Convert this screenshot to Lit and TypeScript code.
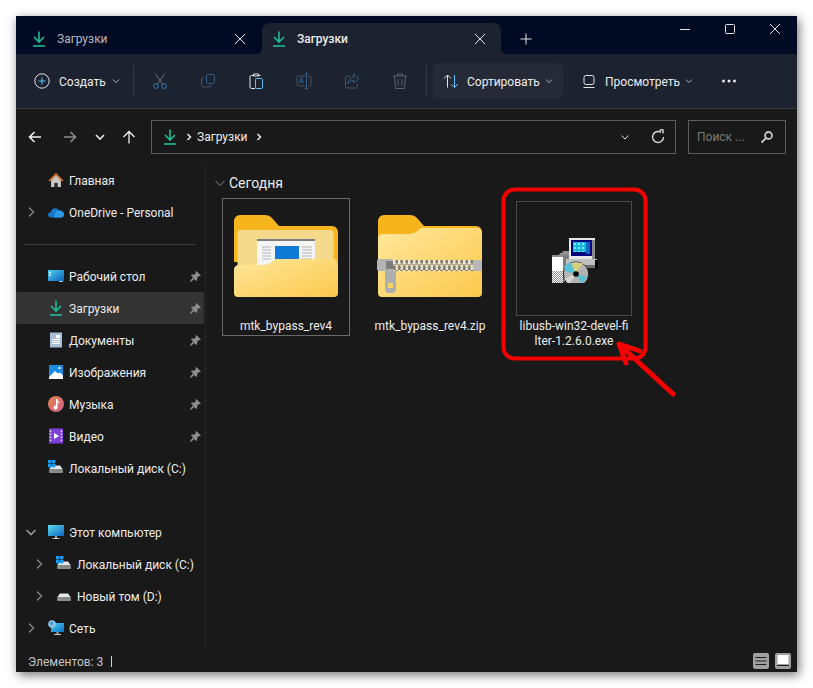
import { LitElement, html, svg, css } from 'lit';
import { customElement } from 'lit/decorators.js';

const dl = html`<svg class="ic" viewBox="0 0 16 16" fill="none" stroke="#1fbb94" stroke-width="1.6"><path d="M8 0.500V10.500M3 6l5 5 5-5"/><path d="M2 15h12"/></svg>`;
const chevDown = html`<svg class="chev" viewBox="0 0 10 10" fill="none" stroke="#b0b4ba" stroke-width="1"><path d="M2 3.500l3 3 3-3"/></svg>`;
const x = html`<svg class="ic" viewBox="0 0 16 16" fill="none" stroke="#e6e6e6" stroke-width="1"><path d="M3 3l10 10M13 3L3 13"/></svg>`;
const pin = html`<svg class="pin" viewBox="0 0 12 12" fill="#8c8c8c"><path d="M7 0l5 5-1.300.8-1-.3-2 2 .3 2.300-1.200 1.200-2.300-2.300L1 12l-1-1 3.300-3.800L1 4.900l1.200-1.200 2.300.3 2-2-.3-1z"/></svg>`;
const arrowRight = html`<svg class="side-chev" viewBox="0 0 16 16" fill="none" stroke="#7c7c7c" stroke-width="1.600"><path d="M6 3.500l4.500 4.500L6 12.500"/></svg>`;
const arrowDown = html`<svg class="side-chev" viewBox="0 0 16 16" fill="none" stroke="#9a9a9a" stroke-width="1.600"><path d="M3.500 6L8 10.500 12.500 6"/></svg>`;

const winLogo = svg`<rect x="0" y="0" width="3.400" height="3.400" fill="#1a9bf0"/><rect x="4" y="0" width="3.400" height="3.400" fill="#1a9bf0"/><rect x="0" y="4" width="3.400" height="3.400" fill="#1a9bf0"/><rect x="4" y="4" width="3.400" height="3.400" fill="#1a9bf0"/>`;
const drive = svg`<path d="M1 9.500L4 5.500H12L15 9.500z" fill="#e8e8e8"/><rect x="1" y="9.500" width="14" height="3.500" rx="1" fill="#8a8a8a"/><rect x="3" y="10.800" width="1.500" height="1" fill="#5fd070"/>`;

const homeIcon = html`<svg class="ic" viewBox="0 0 16 16"><path d="M3 8v7h3.500v-4h3v4H13V8L8 3z" fill="#c8c4c0"/><path d="M0.500 8.500L8 1l7.500 7.500-1 1L8 3 1.500 9.500z" fill="#ec7a24"/></svg>`;
const cloudIcon = html`<svg class="ic" viewBox="0 0 16 16"><path d="M3.500 13.500C1.500 13.500 0 12.300 0 10.800 0 9.300 1.200 8.300 2.700 8.200 3.200 5.800 5 4.300 7.200 4.300c1.700 0 3 .8 3.800 2.200 2.800-.3 5 1.500 5 4 0 1.700-1.300 3-3 3z" fill="#1577d0"/><path d="M7 8.500c1-1.500 3-2.300 4.500-2 2.700 0 4.500 1.700 4.500 4 0 1.700-1.300 3-3 3H6z" fill="#2b9be8"/></svg>`;
const desktopIcon = html`<svg class="ic" viewBox="0 0 16 16"><defs><linearGradient id="dg" x1="0" y1="0" x2="1" y2="1"><stop offset="0" stop-color="#4fd0f4"/><stop offset="1" stop-color="#0c62b8"/></linearGradient></defs><rect x="0" y="2" width="16" height="11" fill="url(#dg)"/><rect x="1" y="4" width="2" height="1.400" fill="#e8f8ff"/><rect x="1" y="6.500" width="2" height="1.400" fill="#e8f8ff"/><rect x="11" y="13" width="4" height="1" fill="#9cc8ea"/></svg>`;
const docIcon = html`<svg class="ic" viewBox="0 0 16 16"><rect x="2" y="0.500" width="12" height="15" fill="#a8bfd6"/><rect x="8" y="3" width="4" height="3" fill="#fff"/><path d="M4 7.500h8M4 9.500h8M4 11.500h8" stroke="#fff" stroke-width="1"/></svg>`;
const imgIcon = html`<svg class="ic" viewBox="0 0 16 16"><rect x="1" y="1" width="14" height="14" fill="#1a8be0"/><path d="M1 13l6-6 3 2.500 2-1 3 3V15H1z" fill="#fff"/><rect x="10.500" y="3" width="2" height="2" fill="#fff"/></svg>`;
const musicIcon = html`<svg class="ic" viewBox="0 0 16 16"><defs><linearGradient id="mg" x1="0" y1="0" x2="1" y2="1"><stop offset="0" stop-color="#e8824a"/><stop offset="1" stop-color="#cc5f86"/></linearGradient></defs><circle cx="8" cy="8" r="8" fill="url(#mg)"/><path d="M8 3h1.500v1.500L11.500 6v1L9.500 6v5.500a2 2 0 1 1-1.500-1.900z" fill="#fff"/></svg>`;
const videoIcon = html`<svg class="ic" viewBox="0 0 16 16"><rect x="1" y="0.500" width="14" height="15" fill="#7d3fd6"/><path d="M6 5l5 3-5 3z" fill="#fff"/><path d="M2.500 2.500v11M13.500 2.500v11" stroke="#e6d8ff" stroke-width="1.500" stroke-dasharray="1.500 1.500"/></svg>`;
const diskC = html`<svg class="ic" viewBox="0 0 16 16">${drive}${winLogo}</svg>`;
const diskD = html`<svg class="ic" viewBox="0 0 16 16">${drive}</svg>`;
const pcIcon = html`<svg class="ic" viewBox="0 0 16 16"><defs><linearGradient id="pg" x1="0" y1="0" x2="1" y2="1"><stop offset="0" stop-color="#5cdcf0"/><stop offset="1" stop-color="#0c66c0"/></linearGradient></defs><rect x="0" y="1" width="16" height="11" fill="url(#pg)"/><rect x="7" y="12" width="2" height="2" fill="#a8a8a8"/><rect x="4.500" y="14" width="7" height="1" fill="#c8c8c8"/></svg>`;
const netIcon = html`<svg class="ic" viewBox="0 0 16 16"><defs><linearGradient id="ng" x1="0" y1="0" x2="1" y2="1"><stop offset="0" stop-color="#4ed0f0"/><stop offset="1" stop-color="#0c70c8"/></linearGradient></defs><rect x="3" y="3" width="13" height="9" fill="url(#ng)"/><rect x="8.500" y="12" width="2" height="2" fill="#a8a8a8"/><rect x="6" y="14" width="7" height="1" fill="#c8c8c8"/><circle cx="4" cy="4" r="3.800" fill="#8cc4e8"/><path d="M2 2.500l2.500-.8L5 4 3 5.500z" fill="#2f86c8"/></svg>`;

const folderOpen = html`<svg class="folder" viewBox="0 0 104 82">
  <defs><linearGradient id="ff" x1="0" y1="0" x2="1" y2="1"><stop offset="0" stop-color="#ffe79c"/><stop offset="1" stop-color="#fbc94c"/></linearGradient></defs>
  <path d="M0 6a6 6 0 0 1 6-6h25c3 0 5 1 7 3l7 8h53a6 6 0 0 1 6 6v30H0z" fill="#f6b51c"/>
  <rect x="3.500" y="15" width="96" height="50" rx="3" fill="#f4d98c"/>
  <rect x="23" y="24" width="58" height="30" fill="#f4f4f4"/>
  <rect x="23" y="24" width="58" height="2" fill="#7d7d7d"/>
  <rect x="41" y="31" width="24" height="22" fill="#0f7ad6"/>
  <path d="M28 32h9M28 35h9M28 38h9M28 41h9M28 44h9M68 32h10M68 35h10M68 38h10M68 41h10M68 44h10" stroke="#b0b4b8" stroke-width="1"/>
  <path d="M0 55c0-3 2-5 5-5h24c3 0 5-.8 7-2l4-3c1-.8 2-1 4-1h55c3 0 5 2 5 5v29a4 4 0 0 1-4 4H4a4 4 0 0 1-4-4z" fill="url(#ff)"/>
</svg>`;
const folderZip = html`<svg class="folder" viewBox="0 0 104 82">
  <defs>
    <linearGradient id="zf" x1="0" y1="0" x2="1" y2="1"><stop offset="0" stop-color="#ffe79c"/><stop offset="1" stop-color="#fbc94c"/></linearGradient>
    <pattern id="teeth" width="5" height="11" patternUnits="userSpaceOnUse"><rect width="5" height="11" fill="#b8ab8a"/><rect x="0" y="0" width="2.500" height="5" fill="#efebe3"/><rect x="2.500" y="6" width="2.500" height="5" fill="#e4e0d8"/><rect x="2.500" y="0" width="2.500" height="4" fill="#857e64"/><rect x="0" y="7" width="2.500" height="4" fill="#857e64"/></pattern>
  </defs>
  <path d="M0 6a6 6 0 0 1 6-6h26c3 0 5 1 7 3l7 8h52a6 6 0 0 1 6 6v30H0z" fill="#f6b51c"/>
  <path d="M0 24c0-3 2-5 5-5h26c3 0 5-.8 7-2l4-3c1-.8 2-1 4-1h53c3 0 5 2 5 5v60a4 4 0 0 1-4 4H4a4 4 0 0 1-4-4z" fill="url(#zf)"/>
  <rect x="14" y="45" width="82" height="11" fill="url(#teeth)"/>
  <rect x="-1" y="44" width="16" height="12" rx="2" fill="#b4b4b4"/>
  <rect x="95" y="45" width="9" height="11" fill="#b8b8b8"/>
  <rect x="8" y="46" width="7" height="8" fill="#7e7e7e"/>
  <path d="M7 56h11v19l-2 3H9l-2-3z" fill="#aeaeae"/>
  <rect x="10" y="68" width="5" height="5" fill="#f6d668"/>
</svg>`;
const exeIcon = html`<svg class="exe" viewBox="0 0 48 48" shape-rendering="crispEdges">
  <defs>
    <pattern id="dither" width="2" height="2" patternUnits="userSpaceOnUse"><rect width="2" height="2" fill="#fff"/><rect width="1" height="1" fill="#8c8c8c"/><rect x="1" y="1" width="1" height="1" fill="#8c8c8c"/></pattern>
    <pattern id="scr" width="4" height="4" patternUnits="userSpaceOnUse"><rect width="4" height="4" fill="#18b8e0"/><rect width="2" height="2" fill="#7ce8f0"/></pattern>
  </defs>
  <path d="M2 20h6l6-4h5v4H16l-2 4H2z" fill="#8e8e8e"/>
  <rect x="2" y="22" width="11" height="14" fill="#fff"/>
  <rect x="2" y="36" width="11" height="12" fill="url(#dither)"/>
  <rect x="13" y="20" width="6" height="27" fill="#7c7c7c"/>
  <rect x="19" y="3" width="26" height="21" fill="#e8e8e8"/>
  <rect x="21" y="5" width="21" height="16" fill="#000080"/>
  <rect x="23" y="7" width="13" height="10" fill="url(#scr)"/>
  <rect x="36" y="7" width="4" height="12" fill="#0868c0"/>
  <rect x="42" y="5" width="3" height="19" fill="#8c8c8c"/>
  <rect x="16" y="24" width="31" height="9" fill="#c0c0c0"/>
  <rect x="16" y="30" width="31" height="3" fill="#6e6e6e"/>
  <rect x="45" y="25" width="3" height="8" fill="#000"/>
  <circle cx="26" cy="39.500" r="13" fill="#2a2a2a" shape-rendering="auto"/>
  <circle cx="26" cy="39" r="12" fill="#b4b4b4" shape-rendering="auto"/>
  <path d="M26 39L19 28h14z" fill="#d8d080" shape-rendering="auto"/>
  <path d="M26 39L14.500 36v-5l6-4z" fill="#58c0d4" shape-rendering="auto"/>
  <path d="M26 39l6 10 5-7z" fill="#58c0d4" shape-rendering="auto"/>
  <path d="M26 39L19 49.500l-5-6z" fill="#d8d8c8" shape-rendering="auto"/>
  <circle cx="26" cy="39" r="2.800" fill="#000" shape-rendering="auto"/>
</svg>`;

type NavRow = { label: string; icon: unknown; pin?: boolean; arrow?: unknown; sub?: boolean; active?: boolean };

const navTop: NavRow[] = [
  { label: 'Главная', icon: homeIcon },
  { label: 'OneDrive - Personal', icon: cloudIcon, arrow: arrowRight },
];
const navPinned: NavRow[] = [
  { label: 'Рабочий стол', icon: desktopIcon, pin: true },
  { label: 'Загрузки', icon: dl, pin: true, active: true },
  { label: 'Документы', icon: docIcon, pin: true },
  { label: 'Изображения', icon: imgIcon, pin: true },
  { label: 'Музыка', icon: musicIcon, pin: true },
  { label: 'Видео', icon: videoIcon, pin: true },
  { label: 'Локальный диск (C:)', icon: diskC },
];
const navPc: NavRow[] = [
  { label: 'Этот компьютер', icon: pcIcon, arrow: arrowDown },
  { label: 'Локальный диск (C:)', icon: diskC, arrow: arrowRight, sub: true },
  { label: 'Новый том (D:)', icon: diskD, arrow: arrowRight, sub: true },
  { label: 'Сеть', icon: netIcon, arrow: arrowRight },
];

@customElement('app-root')
export class AppRoot extends LitElement {
  static styles = css`
    :host {
      display: block;
      padding: 16px;
      background: #fff;
      font-family: 'Roboto', 'Noto Sans', sans-serif;
      font-size: 12px;
      color: #ececec;
    }
    .window {
      position: relative;
      height: 656px;
      display: flex;
      flex-direction: column;
      background: #191919;
      box-shadow: 2px 3px 10px rgba(0, 0, 0, 0.55);
    }
    svg { display: block; flex: none; }
    .ic { width: 16px; height: 16px; }
    .chev { width: 10px; height: 10px; }

    .titlebar { height: 38px; display: flex; background: #000a22; }
    .tab { height: 31px; margin-top: 7px; display: flex; align-items: center; box-sizing: border-box; }
    .tab .name { margin-left: 10px; padding-top: 1px; }
    .tab .close { margin-left: auto; }
    .tab1 { width: 246px; padding: 0 14px 0 15px; color: #b4b8be; }
    .tab2 {
      position: relative;
      width: 239px;
      padding: 0 13px 0 9px;
      background: #1c2230;
      border-radius: 8px 8px 0 0;
      font-weight: 500;
    }
    .tab2::before, .tab2::after {
      content: '';
      position: absolute;
      bottom: 0;
      width: 6px;
      height: 6px;
    }
    .tab2::before { left: -6px; background: radial-gradient(circle at 0 0, transparent 6px, #1c2230 6.5px); }
    .tab2::after { right: -6px; background: radial-gradient(circle at 100% 0, transparent 6px, #1c2230 6.5px); }
    .plus { margin: 15px 0 0 17px; }
    .winctl { margin-left: auto; display: flex; }
    .winctl div { width: 45px; height: 26px; display: flex; align-items: center; justify-content: center; }

    .toolbar {
      height: 54px;
      display: flex;
      align-items: center;
      padding-left: 18px;
      background: #1c2230;
      border-bottom: 1px solid #3a3a3a;
    }
    .txt { padding-top: 1px; }
    .tb-new { width: 99px; display: flex; align-items: center; }
    .tb-new .txt { margin: 0 5px 0 9px; }
    .sep { width: 1px; height: 32px; background: #333845; }
    .slot { width: 48px; height: 36px; display: flex; align-items: center; justify-content: center; }
    .slots { display: flex; margin: 0 2px; }
    .tb-btn {
      width: 130px;
      height: 36px;
      box-sizing: border-box;
      padding: 0 7px 0 10px;
      display: flex;
      align-items: center;
      border-radius: 4px;
    }
    .tb-btn .txt { margin-left: 8px; }
    .tb-btn .chev { margin-left: auto; }
    .sort { margin-left: 6px; padding-right: 9px; background: #252a36; }
    .view { margin-left: 8px; }
    .dots { margin-left: 4px; }

    .addr { height: 55px; display: flex; align-items: center; padding-left: 10px; }
    .nav { width: 18px; display: flex; justify-content: center; }
    .fwd { margin-left: 17px; }
    .rec { margin-left: 12px; }
    .up { margin-left: 11px; }
    .crumbs {
      margin-left: 13px;
      width: 525px;
      height: 34px;
      box-sizing: border-box;
      border: 1px solid #5c5c5c;
      display: flex;
      align-items: center;
      padding: 0 9px 0 10px;
    }
    .crumbs .name { margin-left: 4px; }
    .crumbs .hist { margin-left: auto; }
    .crumbs .refresh { margin-left: 20px; }
    .crumb-sep { width: 8px; height: 10px; margin-left: 7px; }
    .search {
      margin-left: 12px;
      width: 98px;
      height: 34px;
      box-sizing: border-box;
      border: 1px solid #5c5c5c;
      display: flex;
      align-items: center;
      justify-content: space-between;
      padding: 0 10px 0 8px;
      color: #7a7a7a;
    }

    .body { flex: 1; display: flex; min-height: 0; }
    .sidebar { width: 190px; box-sizing: border-box; border-right: 1px solid #262626; }
    .row { width: 188px; height: 32px; display: flex; align-items: center; padding-left: 7px; box-sizing: border-box; border-radius: 2px; }
    .row.active { background: #333; }
    .side-chev { width: 16px; height: 16px; }
    .arrow-slot { width: 16px; height: 16px; margin-right: 9px; }
    .row.sub { padding-left: 15px; }
    .row .label { margin-left: 5px; padding-top: 1px; white-space: nowrap; }
    .row .pin { width: 11px; height: 11px; margin-left: auto; margin-right: 3px; }
    .gap { height: 32px; display: flex; align-items: center; }
    .gap i { display: block; margin-left: 8px; width: 172px; height: 1px; background: #3c3c3c; }

    .main { flex: 1; padding: 8px 0 0 16px; }
    .group { height: 22px; margin: 0 0 4px -8px; display: flex; align-items: center; font-size: 14px; }
    .group svg { width: 12px; height: 12px; margin-right: 3px; }
    .tiles { display: flex; gap: 16px; }
    .tile { width: 128px; height: 138px; box-sizing: border-box; padding-top: 3px; text-align: center; }
    .tile.focus { outline: 1px solid #6a6a6a; outline-offset: -1px; }
    .thumb { height: 115px; box-sizing: border-box; padding-bottom: 5px; display: flex; align-items: center; justify-content: center; }
    .thumb.framed { width: 116px; margin: 0 auto; padding: 0; border: 1px solid #4a4a4a; }
    .folder { width: 104px; height: 82px; overflow: visible; }
    .exe { width: 48px; height: 48px; }
    .tile-label { margin-top: 3px; line-height: 15px; white-space: nowrap; }

    .status { height: 22px; display: flex; align-items: center; padding: 0 6px 0 12px; color: #c4c4c4; }
    .status span:first-child { padding-top: 1px; }
    .status .bar { width: 1px; height: 11px; background: #d0d0d0; margin-left: 8px; }
    .views { margin-left: auto; display: flex; gap: 6px; }
    .vbtn { width: 16px; height: 16px; background: #a0a0a0; border-radius: 2px; }

    .markup { position: absolute; left: 0; top: 0; pointer-events: none; }
  `;

  private navRow(r: NavRow) {
    return html`<div class="row ${r.sub ? 'sub' : ''} ${r.active ? 'active' : ''}">
      <div class="arrow-slot">${r.arrow ?? ''}</div>
      ${r.icon}
      <span class="label">${r.label}</span>
      ${r.pin ? pin : ''}
    </div>`;
  }

  render() {
    return html`<div class="window">
      <div class="titlebar">
        <div class="tab tab1">${dl}<span class="name">Загрузки</span><span class="close">${x}</span></div>
        <div class="tab tab2">${dl}<span class="name">Загрузки</span><span class="close">${x}</span></div>
        <svg class="ic plus" viewBox="0 0 16 16" fill="none" stroke="#e6e6e6"><path d="M8 2.500v11M2.500 8h11"/></svg>
        <div class="winctl">
          <div><svg class="ic" viewBox="0 0 16 16" fill="none" stroke="#e6e6e6"><path d="M3 8.500h10"/></svg></div>
          <div><svg class="ic" viewBox="0 0 16 16" fill="none" stroke="#e6e6e6"><rect x="3.500" y="3.500" width="9" height="9" rx="1"/></svg></div>
          <div><svg class="ic" viewBox="0 0 16 16" fill="none" stroke="#e6e6e6"><path d="M3 3l10 10M13 3L3 13"/></svg></div>
        </div>
      </div>

      <div class="toolbar">
        <div class="tb-new">
          <svg class="ic" viewBox="0 0 16 16" fill="none"><circle cx="8" cy="8" r="7.200" stroke="#e4e4e4"/><path d="M8 4.500v7M4.500 8h7" stroke="#5cc2f5"/></svg>
          <span class="txt">Создать</span>${chevDown}
        </div>
        <div class="sep"></div>
        <div class="slots">
          <div class="slot"><svg class="ic" viewBox="0 0 16 16" fill="none"><path d="M3.500 1l7 10M12.500 1l-7 10" stroke="#6b7078"/><circle cx="4" cy="13" r="2.300" stroke="#34608a" stroke-width="1.200"/><circle cx="12" cy="13" r="2.300" stroke="#34608a" stroke-width="1.200"/></svg></div>
          <div class="slot"><svg class="ic" viewBox="0 0 16 16" fill="none"><rect x="6.500" y="1.500" width="8" height="9" rx="2" stroke="#34608a"/><path d="M4 4.500A2.500 2.500 0 0 0 1.500 7v4.500A2.500 2.500 0 0 0 4 14h5a2.500 2.500 0 0 0 2.500-2" stroke="#4a5460"/></svg></div>
          <div class="slot"><svg class="ic" viewBox="0 0 16 16" fill="none"><path d="M5 2.500H3.500A1.500 1.500 0 0 0 2 4v10a1.500 1.500 0 0 0 1.500 1.500H7" stroke="#e8e8e8"/><path d="M11 2.500h1.500M5.500 1h5v2h-5z" stroke="#e8e8e8"/><rect x="7.500" y="5.500" width="7" height="10" rx="1" stroke="#5cc2f5"/></svg></div>
          <div class="slot"><svg class="ic" viewBox="0 0 16 16" fill="none"><path d="M9.500 3H2.500A1.500 1.500 0 0 0 1 4.500v7A1.500 1.500 0 0 0 2.500 13H9.500M12 3h1.500A1.500 1.500 0 0 1 15 4.500v7a1.500 1.500 0 0 1-1.500 1.500H12" stroke="#4a5460"/><path d="M9 0.500h3M10.500 .5v15M9 15.500h3M3.500 10.500l2-6 2 6M4.300 8.500h2.500" stroke="#34608a"/></svg></div>
          <div class="slot"><svg class="ic" viewBox="0 0 16 16" fill="none"><path d="M6 3H3a1.500 1.500 0 0 0-1.500 1.500v9A1.500 1.500 0 0 0 3 15h9a1.500 1.500 0 0 0 1.500-1.500V11" stroke="#4a5460"/><path d="M9.500 1l5.500 4.500L9.500 10V7.500C7 7.500 5.500 8.500 4 11c0-4 2-6.500 5.500-6.500z" stroke="#34608a"/></svg></div>
          <div class="slot"><svg class="ic" viewBox="0 0 16 16" fill="none" stroke="#5f646c"><path d="M1 3h14M5.500 3V1h5v2M2.500 3l1 12.500h9l1-12.500M6 6v7M10 6v7"/></svg></div>
        </div>
        <div class="sep"></div>
        <div class="tb-btn sort">
          <svg class="ic" viewBox="0 0 16 16" fill="none"><path d="M4.500 14.500V2M1 5.500l3.500-3.500L8 5.500" stroke="#e4e4e4"/><path d="M11.500 2v12.500M8 11l3.500 3.500L15 11" stroke="#5cc2f5"/></svg>
          <span class="txt">Сортировать</span>${chevDown}
        </div>
        <div class="tb-btn view">
          <svg class="ic" viewBox="0 0 16 16" fill="none" stroke="#e4e4e4"><rect x="3" y="2.500" width="10" height="9" rx="2"/><path d="M2.500 14.500h11"/></svg>
          <span class="txt">Просмотреть</span>${chevDown}
        </div>
        <div class="slot dots"><svg class="ic" viewBox="0 0 16 16" fill="#e6e6e6"><circle cx="2.500" cy="8" r="1.500"/><circle cx="8" cy="8" r="1.500"/><circle cx="13.500" cy="8" r="1.500"/></svg></div>
      </div>

      <div class="addr">
        <div class="nav"><svg class="ic" viewBox="0 0 16 16" fill="none" stroke="#f0f0f0" stroke-width="1.600"><path d="M14 8H2.500M7.500 3l-5 5 5 5"/></svg></div>
        <div class="nav fwd"><svg class="ic" viewBox="0 0 16 16" fill="none" stroke="#8a8a8a" stroke-width="1.600"><path d="M2 8h11.500M8.500 3l5 5-5 5"/></svg></div>
        <div class="nav rec"><svg class="ic" viewBox="0 0 16 16" fill="none" stroke="#e8e8e8" stroke-width="1.600"><path d="M4 6l4 4 4-4"/></svg></div>
        <div class="nav up"><svg class="ic" viewBox="0 0 16 16" fill="none" stroke="#f0f0f0" stroke-width="1.300"><path d="M8 14.500V2.500M2.500 8l5.500-5.500L13.500 8"/></svg></div>
        <div class="crumbs">
          ${dl}
          <svg class="crumb-sep" viewBox="0 0 8 10" fill="none" stroke="#e8e8e8" stroke-width="1.500"><path d="M2.500 2l3 3-3 3"/></svg>
          <span class="name">Загрузки</span>
          <svg class="crumb-sep" viewBox="0 0 8 10" fill="none" stroke="#e8e8e8" stroke-width="1.500"><path d="M2.500 2l3 3-3 3"/></svg>
          <svg class="chev hist" viewBox="0 0 10 10" fill="none" stroke="#e0e0e0"><path d="M1.500 3.500l3.500 3.500 3.500-3.500"/></svg>
          <svg class="ic refresh" viewBox="0 0 16 16" fill="none" stroke="#d8d8d8" stroke-width="1.400"><path d="M13.500 8A5.500 5.500 0 1 1 11 3.400"/><path d="M9.500 1H13v3.500" /></svg>
        </div>
        <div class="search">
          <span>Поиск ...</span>
          <svg class="ic" viewBox="0 0 16 16" fill="none" stroke="#c8c8c8" stroke-width="1.800"><circle cx="9.500" cy="6.500" r="3.500"/><path d="M7 9l-4.500 4.500"/></svg>
        </div>
      </div>

      <div class="body">
        <div class="sidebar">
          ${navTop.map((r) => this.navRow(r))}
          <div class="gap"><i></i></div>
          ${navPinned.map((r) => this.navRow(r))}
          <div class="gap"></div>
          ${navPc.map((r) => this.navRow(r))}
        </div>
        <div class="main">
          <div class="group">
            <svg viewBox="0 0 12 12" fill="none" stroke="#8a8a8a"><path d="M1.500 4L6 8.500 10.500 4"/></svg>
            Сегодня
          </div>
          <div class="tiles">
            <div class="tile focus">
              <div class="thumb">${folderOpen}</div>
              <div class="tile-label">mtk_bypass_rev4</div>
            </div>
            <div class="tile">
              <div class="thumb">${folderZip}</div>
              <div class="tile-label">mtk_bypass_rev4.zip</div>
            </div>
            <div class="tile">
              <div class="thumb framed">${exeIcon}</div>
              <div class="tile-label">libusb-win32-devel-fi<br />lter-1.2.6.0.exe</div>
            </div>
          </div>
        </div>
      </div>

      <div class="status">
        <span>Элементов: 3</span><span class="bar"></span>
        <div class="views">
          <svg class="vbtn" viewBox="0 0 16 16" fill="none" stroke="#1c1c1c"><path d="M2.500 4.500h11M2.500 8h11M2.500 11.500h11"/></svg>
          <svg class="vbtn" viewBox="0 0 16 16"><rect x="2.500" y="2" width="11" height="9" fill="#fff"/><rect x="2" y="12" width="12" height="1" fill="#1c1c1c"/></svg>
        </div>
      </div>

      <!-- red annotation drawn over the window -->
      <svg class="markup" width="781" height="656" viewBox="16 16 781 656" fill="none" stroke="#f40000" stroke-linecap="round" stroke-linejoin="round">
        <rect x="503.500" y="189.500" width="142" height="169" rx="11" stroke-width="4"/>
        <path d="M673 394L621 346" stroke-width="5"/>
        <path d="M640 351L619 344L626 363" stroke-width="5"/>
      </svg>
    </div>`;
  }
}
